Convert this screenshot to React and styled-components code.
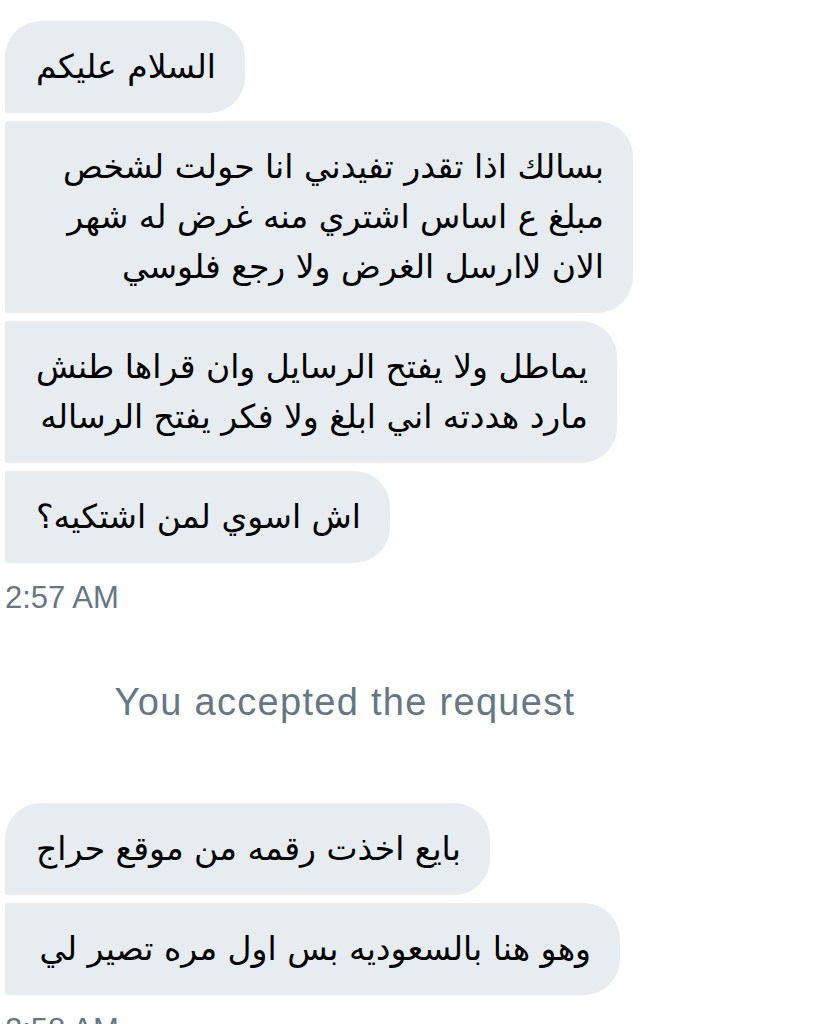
import React from 'react';
import styled, { createGlobalStyle } from 'styled-components';

const GlobalStyle = createGlobalStyle`
  html, body {
    margin: 0;
    padding: 0;
    background: #ffffff;
  }
  body {
    font-family: "Liberation Sans", Arial, sans-serif;
  }
`;

const bubbleRadius = 36;

const Page = styled.div`
  width: 680px;
  padding: 21px 0 0 5px;
  display: flex;
  flex-direction: column;
`;

const Group = styled.div`
  display: flex;
  flex-direction: column;
  align-items: flex-start;
  gap: 8px;
`;

const Bubble = styled.div`
  direction: rtl;
  box-sizing: border-box;
  min-width: ${p => p.$minWidth || 0}px;
  background: #e6ecf0;
  color: #000;
  font-family: "DejaVu Sans", "Noto Sans", sans-serif;
  font-size: 33px;
  line-height: 50px;
  padding: 21px 29px 21px 31px;
  white-space: pre;
  border-radius: ${bubbleRadius}px;
  border-top-left-radius: ${p => (p.$pos === 'first' ? bubbleRadius : 3)}px;
  border-bottom-left-radius: 3px;
`;

const Time = styled.div`
  margin-top: 15px;
  font-size: 31px;
  color: #657786;
  line-height: 40px;
`;

const Notice = styled.div`
  margin: 64px 0 81px;
  text-align: center;
  font-size: 38px;
  letter-spacing: 1.3px;
  color: #657786;
  line-height: 40px;
`;

// minimum widths follow the bubbles' sizes in the thread
const messages = [
  [
    { text: 'السلام عليكم', width: 236 },
    { text: 'بسالك اذا تقدر تفيدني انا حولت لشخص\nمبلغ ع اساس اشتري منه غرض له شهر\nالان لاارسل الغرض ولا رجع فلوسي', width: 628 },
    { text: 'يماطل ولا يفتح الرسايل وان قراها طنش\nمارد هددته اني ابلغ ولا فكر يفتح الرساله', width: 612 },
    { text: 'اش اسوي لمن اشتكيه؟', width: 370 },
  ],
  [
    { text: 'بايع اخذت رقمه من موقع حراج', width: 478 },
    { text: 'وهو هنا بالسعوديه بس اول مره تصير لي', width: 615 },
  ],
];

const posOf = (i, n) => (i === 0 ? 'first' : i === n - 1 ? 'last' : 'middle');

function Thread({ items }) {
  return (
    <Group>
      {items.map((m, i) => (
        <Bubble key={i} $pos={posOf(i, items.length)} $minWidth={m.width}>
          {m.text}
        </Bubble>
      ))}
    </Group>
  );
}

export default function App() {
  return (
    <>
      <GlobalStyle />
      <Page>
        <Thread items={messages[0]} />
        <Time>2:57 AM</Time>
        <Notice>You accepted the request</Notice>
        <Thread items={messages[1]} />
        <Time>2:58 AM</Time>
      </Page>
    </>
  );
}
